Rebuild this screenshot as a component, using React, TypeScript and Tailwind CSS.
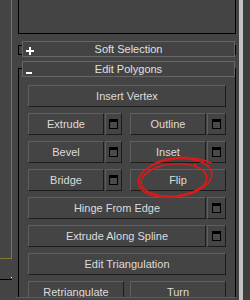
import type { ReactNode } from 'react';

function Btn({ w, children }: { w?: string; children: ReactNode }) {
  return (
    <div
      className={`${w ?? 'w-full'} shrink-0 h-[22px] flex items-center justify-center bg-[#444444] border border-t-[#5f5f5f] border-l-[#5f5f5f] border-b-[#1c1c1c] border-r-[#1c1c1c] text-[11px] text-[#dcdcdc] leading-none`}
    >
      {children}
    </div>
  );
}

function SettingsBtn({ w }: { w: string }) {
  return (
    <div
      className={`${w} shrink-0 h-[22px] flex items-center justify-center bg-[#444444] border border-t-[#5f5f5f] border-l-[#5f5f5f] border-b-[#1c1c1c] border-r-[#1c1c1c]`}
    >
      <div className="w-[9px] h-[10px] border border-black border-t-[3px] bg-[#4a4a4a]" />
    </div>
  );
}

function RolloutHeader({ open, title }: { open: boolean; title: string }) {
  return (
    <div className="relative z-10 ml-[4px] mr-[1px] h-[16px] flex items-center bg-[#434343] border border-[#666666]">
      <span className="w-[12px] pl-[3px] flex items-center">
        {open ? (
          <span className="block w-[6px] h-[2px] bg-white mt-[8px]" />
        ) : (
          <span className="relative block w-[8px] h-[8px] mt-[3px]">
            <span className="absolute left-0 top-[3px] w-[8px] h-[2px] bg-white" />
            <span className="absolute left-[3px] top-0 w-[2px] h-[8px] bg-white" />
          </span>
        )}
      </span>
      <span className="flex-1 text-center text-[11px] text-[#e0e0e0] leading-none pr-[12px]">{title}</span>
    </div>
  );
}

export default function App() {
  return (
    <div className="relative w-[250px] h-[300px] bg-[#444444] flex overflow-hidden font-['Liberation_Sans',Arial,sans-serif]">
      <div className="w-[236px] flex flex-col">
        <div className="h-[297px] flex overflow-hidden">
          {/* left viewport edge */}
          <div className="w-[18px] flex flex-col">
            <div className="w-[12px] h-[259px] border-r border-b border-[#8a7634]" />
            <div className="w-[12px] mt-[18px] flex flex-col items-end">
              <span className="w-px h-px bg-white" />
              <span className="w-full h-px mt-px bg-black" />
            </div>
          </div>

          {/* command panel */}
          <div className="w-[218px] flex flex-col">
            <div className="h-[34px] shrink-0 border-l border-r border-b border-black" />

            <div className="mt-[7px]">
              <RolloutHeader open={false} title="Soft Selection" />
            </div>
            <div className="h-[10px] shrink-0 -mt-[12px] border border-black" />

            <div className="mt-[6px]">
              <RolloutHeader open={true} title="Edit Polygons" />
            </div>
            <div className="flex-1 -mt-[9px] border-l border-r border-t border-black pt-[16px] px-[9px]">
              <div className="flex flex-col gap-[6px]">
                <Btn>Insert Vertex</Btn>
                <div className="flex">
                  <Btn w="w-[76px]">Extrude</Btn>
                  <div className="ml-px"><SettingsBtn w="w-[17px]" /></div>
                  <div className="ml-[8px] flex">
                    <Btn w="w-[76px]">Outline</Btn>
                    <div className="ml-px"><SettingsBtn w="w-[19px]" /></div>
                  </div>
                </div>
                <div className="flex">
                  <Btn w="w-[76px]">Bevel</Btn>
                  <div className="ml-px"><SettingsBtn w="w-[17px]" /></div>
                  <div className="ml-[8px] flex">
                    <Btn w="w-[76px]">Inset</Btn>
                    <div className="ml-px"><SettingsBtn w="w-[19px]" /></div>
                  </div>
                </div>
                <div className="flex">
                  <Btn w="w-[76px]">Bridge</Btn>
                  <div className="ml-px"><SettingsBtn w="w-[17px]" /></div>
                  <div className="ml-[8px] flex">
                    <Btn w="w-[96px]">Flip</Btn>
                  </div>
                </div>
                <div className="flex">
                  <Btn w="w-[178px]">Hinge From Edge</Btn>
                  <div className="ml-px"><SettingsBtn w="w-[19px]" /></div>
                </div>
                <div className="flex">
                  <Btn w="w-[178px]">Extrude Along Spline</Btn>
                  <div className="ml-px"><SettingsBtn w="w-[19px]" /></div>
                </div>
                <Btn>Edit Triangulation</Btn>
                <div className="flex gap-[6px]">
                  <Btn w="w-[96px]">Retriangulate</Btn>
                  <Btn w="w-[96px]">Turn</Btn>
                </div>
              </div>
            </div>
          </div>
        </div>
        <div className="ml-[16px] h-px bg-[#5c5c5c]" />
      </div>

      {/* scrollbar strip */}
      <div className="ml-[3px] w-[4px] h-full bg-[#c4c4c4]" />
      <div className="flex-1 h-full bg-[#3e3e3e]" />

      {/* red hand-drawn annotation around Flip */}
      <svg className="absolute left-0 top-0 pointer-events-none" width="250" height="300" viewBox="0 0 250 300">
        <g fill="none" stroke="#e01818" strokeWidth="1.6" strokeLinecap="round">
          <ellipse cx="175" cy="178" rx="37" ry="19" transform="rotate(-8 175 178)" />
          <ellipse cx="174" cy="180" rx="33" ry="16" transform="rotate(-5 174 180)" />
          <path d="M152 165 C166 156, 192 155, 211 163" />
        </g>
        <circle cx="195" cy="165" r="1.3" fill="#e01818" />
      </svg>
    </div>
  );
}
